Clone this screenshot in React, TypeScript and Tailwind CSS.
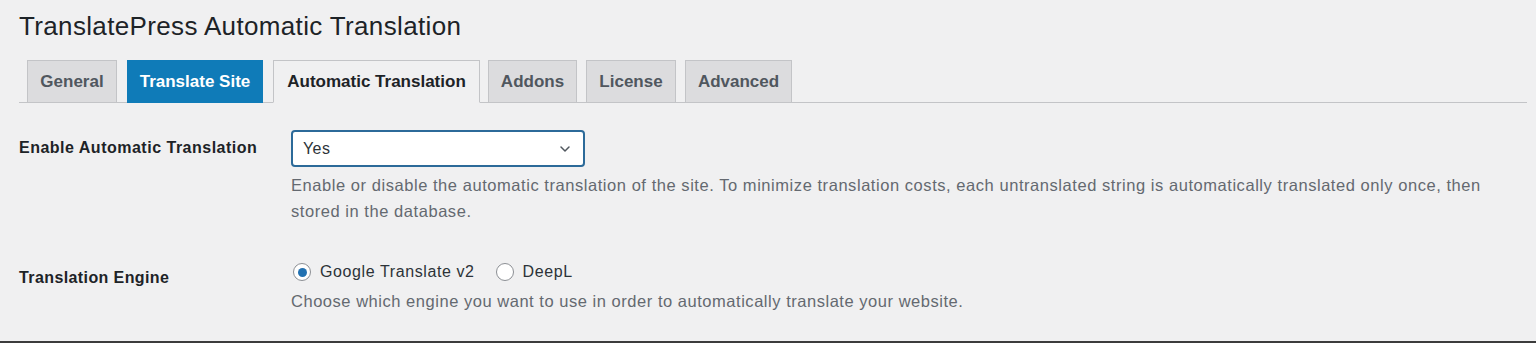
import { ChevronDown } from "lucide-react";

const tabs = [
  { name: "General", w: "w-[90px] ml-0" },
  { name: "Translate Site", w: "w-[136px] ml-[10px]", selected: true },
  { name: "Automatic Translation", w: "w-[207px] ml-[10px]", active: true },
  { name: "Addons", w: "w-[89px] ml-[8px]" },
  { name: "License", w: "w-[90px] ml-[9px]" },
  { name: "Advanced", w: "w-[107px] ml-[9px]" },
];

function Tab({ tab }: { tab: (typeof tabs)[number] }) {
  let css = "bg-[#dcdcde] text-[#50575e] border-[#c3c4c7]";
  if (tab.selected) css = "bg-[#0f7bb8] text-white border-[#0f7bb8]";
  if (tab.active) css = "bg-[#f0f0f1] text-[#1d2327] border-[#c3c4c7] border-b-[#f0f0f1]";
  return (
    <div
      className={
        "h-[43px] -mb-px flex items-center justify-center border text-[17px] font-bold " +
        tab.w +
        " " +
        css
      }
    >
      {tab.name}
    </div>
  );
}

function Radio({ checked, label }: { checked?: boolean; label: string }) {
  return (
    <label className="flex items-center gap-[9px]">
      <span className="w-[18px] h-[18px] rounded-full border border-[#8c8f94] bg-white flex items-center justify-center">
        {checked && <span className="w-[9px] h-[9px] rounded-full bg-[#2271b1]" />}
      </span>
      <span>{label}</span>
    </label>
  );
}

export default function App() {
  return (
    <div
      className="w-[1536px] h-[343px] bg-[#f0f0f1] overflow-hidden flex flex-col"
      style={{ fontFamily: '"Liberation Sans", Arial, sans-serif' }}
    >
      <div className="flex-1 px-[19px] pt-[9px]">
        <h1 className="text-[26px] leading-[34px] tracking-[0.35px] text-[#1d2327]">
          TranslatePress Automatic Translation
        </h1>
        <div className="mt-[17px] w-[1508px] flex pl-[8px] border-b border-[#c3c4c7]">
          {tabs.map((t) => (
            <Tab key={t.name} tab={t} />
          ))}
        </div>

        <div className="flex mt-[27px]">
          <div className="w-[272px] pt-[6px] text-[16px] tracking-[0.5px] font-bold text-[#1d2327]">
            Enable Automatic Translation
          </div>
          <div>
            <div className="w-[294px] h-[37px] border-2 border-[#2c6a99] rounded-[4px] bg-white flex items-center justify-between pl-[10px] pr-[10px] text-[16px] tracking-[0.4px] text-[#2c3338]">
              <span>Yes</span>
              <ChevronDown size={16} strokeWidth={2.25} className="text-[#50575e]" />
            </div>
            <p className="mt-[5px] text-[16.5px] leading-[26px] tracking-[0.55px] text-[#646970]">
              Enable or disable the automatic translation of the site. To minimize translation costs,
              each untranslated string is automatically translated only once, then
              <br />
              stored in the database.
            </p>
          </div>
        </div>

        <div className="flex mt-[38px]">
          <div className="w-[272px] pt-[4px] text-[16px] tracking-[0.4px] font-bold text-[#1d2327]">
            Translation Engine
          </div>
          <div className="pl-[2px]">
            <div className="flex items-center gap-[21px] text-[16px] tracking-[0.6px] text-[#2c3338] h-[20px]">
              <Radio checked label="Google Translate v2" />
              <Radio label="DeepL" />
            </div>
            <p className="mt-[6px] -ml-[2px] text-[16.5px] leading-[26px] tracking-[0.53px] text-[#646970]">
              Choose which engine you want to use in order to automatically translate your website.
            </p>
          </div>
        </div>
      </div>
      <div className="h-[2px] bg-[#3c3c3c]" />
    </div>
  );
}
